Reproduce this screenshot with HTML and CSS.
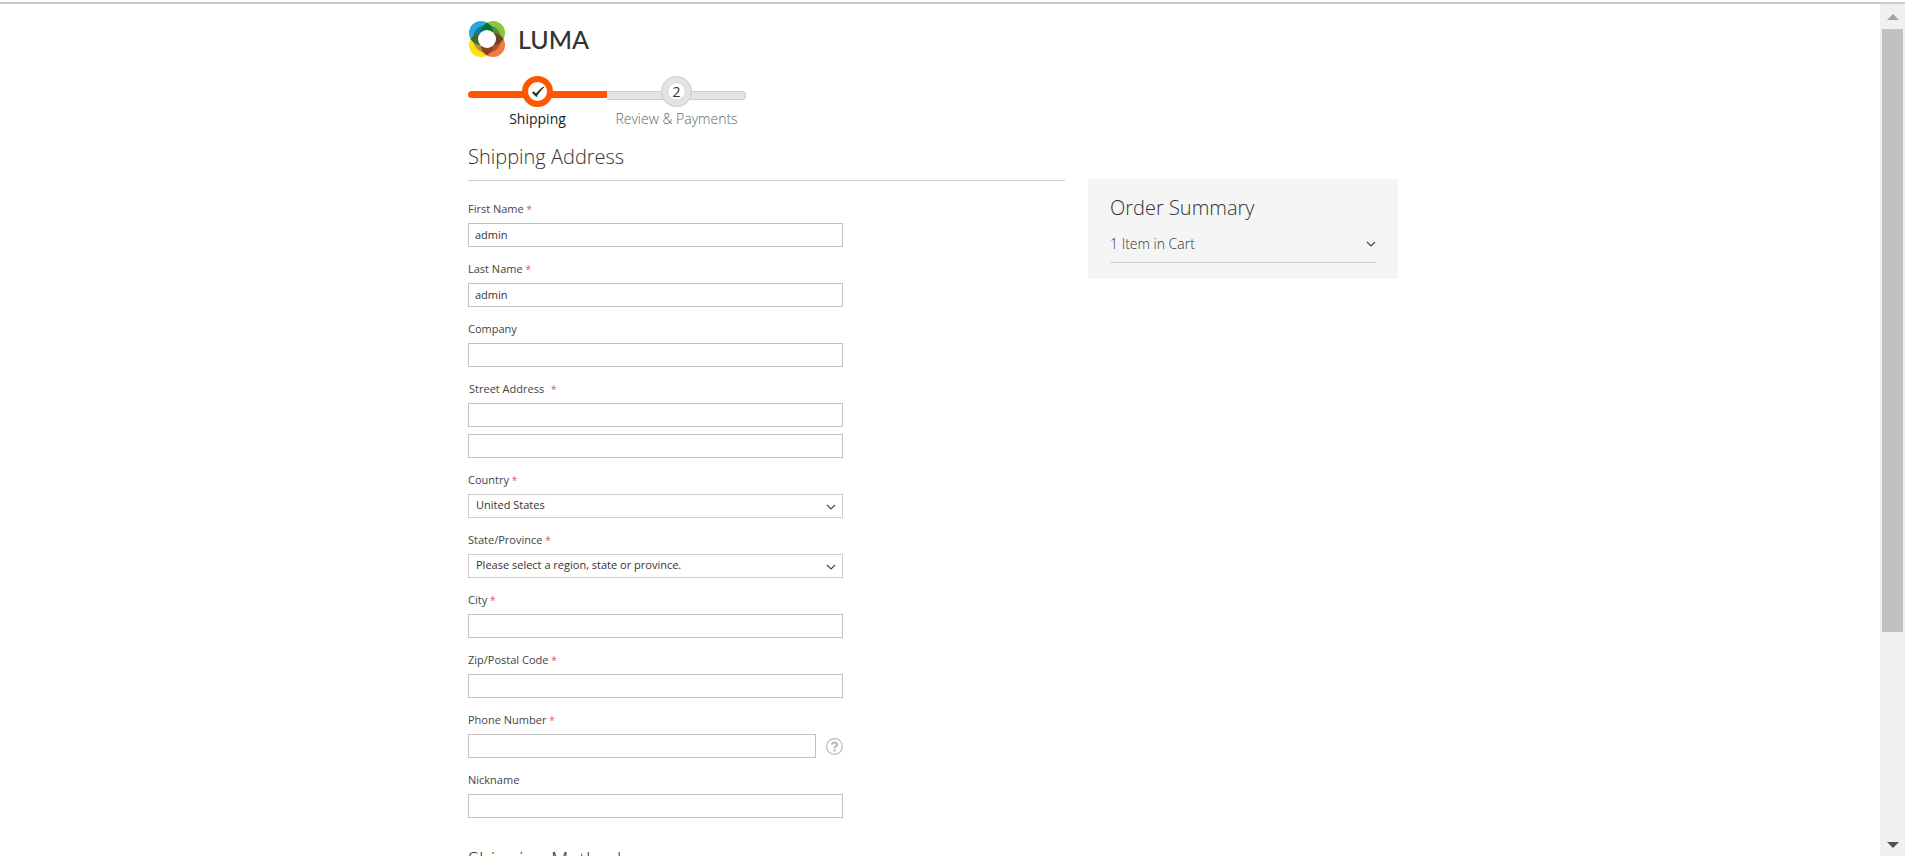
FILE: index.html
```html
<!DOCTYPE html>
<html lang="en">
<head>
<meta charset="utf-8">
<title>Checkout</title>
<link rel="stylesheet" href="styles.css">
</head>
<body>
<div class="window">
  <div class="viewport">
    <div class="page">
      <header class="header">
        <a class="logo" href="#">
          <svg class="logo-mark" viewBox="0 0 38 38" aria-hidden="true">
            <defs>
              <clipPath id="tl"><circle cx="13" cy="13" r="12"/></clipPath>
              <clipPath id="tr"><circle cx="25" cy="13" r="12"/></clipPath>
              <clipPath id="bl"><circle cx="13" cy="25" r="12"/></clipPath>
              <clipPath id="br"><circle cx="25" cy="25" r="12"/></clipPath>
            </defs>
            <circle cx="13" cy="13" r="12" fill="#26a9e0"/>
            <circle cx="25" cy="13" r="12" fill="#8cc63f"/>
            <circle cx="13" cy="25" r="12" fill="#fddf14"/>
            <circle cx="25" cy="25" r="12" fill="#f47b3d"/>
            <circle cx="19" cy="19" r="14" fill="#0f76a0" clip-path="url(#tl)"/>
            <circle cx="19" cy="19" r="14" fill="#58883a" clip-path="url(#tr)"/>
            <circle cx="19" cy="19" r="14" fill="#ab9638" clip-path="url(#bl)"/>
            <circle cx="19" cy="19" r="14" fill="#a9502c" clip-path="url(#br)"/>
            <g clip-path="url(#tl)"><circle cx="25" cy="13" r="12" fill="#007236"/><circle cx="13" cy="25" r="12" fill="#396b32"/></g>
            <g clip-path="url(#br)"><circle cx="25" cy="13" r="12" fill="#6b4420"/><circle cx="13" cy="25" r="12" fill="#8c4220"/></g>
            <circle cx="19" cy="19" r="9" fill="#fff"/>
          </svg>
          <span class="logo-name">LUMA</span>
        </a>
      </header>

      <ol class="progress">
        <li class="step step-active">
          <span class="step-mark"><svg class="check" viewBox="0 0 14 12" aria-hidden="true"><path d="M1 6.8 2.8 5.2 5 7.4C7 4.6 9.6 2.2 12.6.4L13.2 1.2C10.2 4 7.4 7.4 5.4 11.2z" fill="#333"/></svg></span>
          <span class="step-label">Shipping</span>
        </li>
        <li class="step">
          <span class="step-mark">2</span>
          <span class="step-label">Review &amp; Payments</span>
        </li>
      </ol>

      <div class="columns">
        <main class="main">
          <h1 class="title">Shipping Address</h1>
          <form class="form">
            <div class="field"><label for="first">First Name <b class="req">*</b></label><input id="first" type="text" value="admin"></div>
            <div class="field"><label for="last">Last Name <b class="req">*</b></label><input id="last" type="text" value="admin"></div>
            <div class="field"><label for="company">Company</label><input id="company" type="text"></div>
            <div class="field"><label class="legend" for="street">Street Address <b class="req">*</b></label><input id="street" type="text"><input type="text" aria-label="Street Address line 2"></div>
            <div class="field"><label for="country">Country <b class="req">*</b></label>
              <div class="select"><select id="country"><option>United States</option></select><svg class="chevron" viewBox="0 0 10 6" aria-hidden="true"><path d="M1 1l4 4 4-4"/></svg></div></div>
            <div class="field"><label for="state">State/Province <b class="req">*</b></label>
              <div class="select"><select id="state"><option>Please select a region, state or province.</option></select><svg class="chevron" viewBox="0 0 10 6" aria-hidden="true"><path d="M1 1l4 4 4-4"/></svg></div></div>
            <div class="field"><label for="city">City <b class="req">*</b></label><input id="city" type="text"></div>
            <div class="field"><label for="zip">Zip/Postal Code <b class="req">*</b></label><input id="zip" type="text"></div>
            <div class="field"><label for="phone">Phone Number <b class="req">*</b></label>
              <div class="with-help"><input id="phone" type="tel">
                <button class="help" type="button" aria-label="Help"><svg viewBox="0 0 16 16" aria-hidden="true"><circle cx="8" cy="8" r="7.4" fill="none" stroke="#bbb" stroke-width="1.1"/><path d="M5.7 6.3C5.7 3.4 10.4 3.5 10.3 6.1 10.3 7.7 8.1 7.7 8.1 9.7" fill="none" stroke="#b5b5b5" stroke-width="1.9"/><path d="M7.1 10.8h2v2h-2z" fill="#b5b5b5"/></svg></button></div></div>
            <div class="field"><label for="nick">Nickname</label><input id="nick" type="text"></div>
          </form>
          <h2 class="title">Shipping Methods</h2>
        </main>

        <aside class="summary">
          <h2 class="summary-title">Order Summary</h2>
          <button class="cart-toggle" type="button"><span>1 Item in Cart</span><svg class="chevron-flow" viewBox="0 0 10 6" aria-hidden="true"><path d="M1 1l4 4 4-4"/></svg></button>
        </aside>
      </div>
    </div>
  </div>
  <div class="scrollbar" aria-hidden="true">
    <svg class="arrow" viewBox="0 0 12 6"><path d="M6 0l6 6H0z" fill="#a3a3a3"/></svg>
    <div class="track"><div class="thumb"></div></div>
    <svg class="arrow" viewBox="0 0 12 6"><path d="M0 0h12L6 6z" fill="#505050"/></svg>
  </div>
</div>
</body>
</html>
```

FILE: styles.css
```css
* { box-sizing: border-box; }
body {
  margin: 0;
  background: #fff;
  color: #333;
  font: 400 11px/15px "Open Sans", "Noto Sans", sans-serif;
}
.window {
  display: flex;
  height: 100vh;
  padding-top: 2px;
  overflow: hidden;
}
.window::before {
  content: "";
  position: absolute;
  top: 2px;
  left: 0;
  right: 0;
  height: 2px;
  background: #ccc;
}
.viewport {
  flex: 1;
  min-width: 0;
  overflow: hidden;
  padding-right: 14px;
}
.page {
  max-width: 960px;
  margin: 0 auto;
  padding: 0 15px;
}
.header { display: flex; padding-top: 18px; }
.logo {
  display: flex;
  align-items: center;
  gap: 12px;
  color: #333;
  text-decoration: none;
}
.logo-mark { width: 38px; height: 38px; }
.logo-name { font: 500 25px/38px Lato, sans-serif; }

.progress {
  display: flex;
  list-style: none;
  margin: 18px 0 0;
  padding: 0;
}
.step {
  position: relative;
  width: 139px;
  display: flex;
  flex-direction: column;
  align-items: center;
  gap: 2px;
  color: #666;
  font-size: 14px;
  line-height: 20px;
  font-weight: 300;
  white-space: nowrap;
}
.step::before {
  content: "";
  position: absolute;
  top: 15px;
  left: 0;
  right: 0;
  height: 7px;
  background: #e4e4e4;
  border: 1px solid #ccc;
  border-left: 0;
  border-radius: 0 4px 4px 0;
}
.step-active::before {
  background: #ff5501;
  border: 0;
  border-radius: 4px 0 0 4px;
}
.step-mark {
  position: relative;
  display: flex;
  align-items: center;
  justify-content: center;
  width: 31px;
  height: 31px;
  border: 6px solid #e4e4e4;
  border-radius: 50%;
  background: #fff;
  box-shadow: inset 0 0 0 1px #ccc;
  outline: 1px solid #ccc;
  outline-offset: -1px;
  color: #333;
  font-weight: 400;
}
.step-active .step-mark {
  border-color: #ff5501;
  box-shadow: none;
  outline: 0;
}
.check { width: 14px; height: 12px; flex: none; }
.step-active .step-label { font-weight: 400; color: #222; }

.columns {
  display: flex;
  align-items: flex-start;
  gap: 23px;
}
.main { flex: 1; min-width: 0; }
.title {
  margin: 14px 0 0;
  padding-bottom: 10px;
  border-bottom: 1px solid #ccc;
  font-size: 20px;
  line-height: 27px;
  font-weight: 300;
}
.form {
  display: flex;
  flex-direction: column;
  gap: 14px;
  width: 375px;
  max-width: 100%;
  margin: 20px 0 28px;
}
.field { display: flex; flex-direction: column; }
.field label { margin-bottom: 7px; color: #444; }
.field .legend { padding-left: 1px; }
.req {
  color: #e85552;
  font-size: 10px;
  line-height: 1;
  font-weight: 400;
}
.legend .req { margin-left: 4px; }
input, select {
  width: 100%;
  height: 24px;
  margin: 0;
  padding: 0 6px 2px;
  border: 1px solid #c2c2c2;
  border-radius: 0;
  background: #fff;
  color: #333;
  font: inherit;
}
input + input { margin-top: 7px; }
select {
  appearance: none;
  padding: 0 24px 3px 7px;
  border-color: #ccc;
}
.select { position: relative; display: flex; }
.chevron {
  position: absolute;
  right: 7px;
  top: 10px;
  width: 10px;
  height: 6px;
}
.chevron path, .chevron-flow path {
  fill: none;
  stroke: #444;
  stroke-width: 1.1;
}
.chevron-flow { width: 10px; height: 6px; }
.with-help { display: flex; align-items: center; gap: 10px; }
.help {
  width: 17px;
  height: 17px;
  flex: none;
  padding: 0;
  border: 0;
  background: none;
}
.help svg { display: block; width: 17px; height: 17px; }

.summary {
  width: 310px;
  margin-top: 50px;
  padding: 15px 22px 16px;
  background: #f5f5f5;
}
.summary-title {
  margin: 0;
  font-size: 20px;
  line-height: 27px;
  font-weight: 300;
}
.cart-toggle {
  display: flex;
  align-items: center;
  justify-content: space-between;
  width: 100%;
  margin-top: 13px;
  padding: 0 0 8px;
  border: 0;
  border-bottom: 1px solid #ccc;
  background: none;
  color: #333;
  font: 300 14px/20px "Open Sans", "Noto Sans", sans-serif;
}

.scrollbar {
  display: flex;
  flex-direction: column;
  align-items: center;
  width: 25px;
  margin-top: 2px;
  padding: 10px 0 8px;
  background: #f0f0f0;
}
.arrow { width: 12px; height: 6px; }
.track { flex: 1; width: 21px; padding: 9px 0; }
.thumb { height: 75%; background: #c1c1c1; }
```
